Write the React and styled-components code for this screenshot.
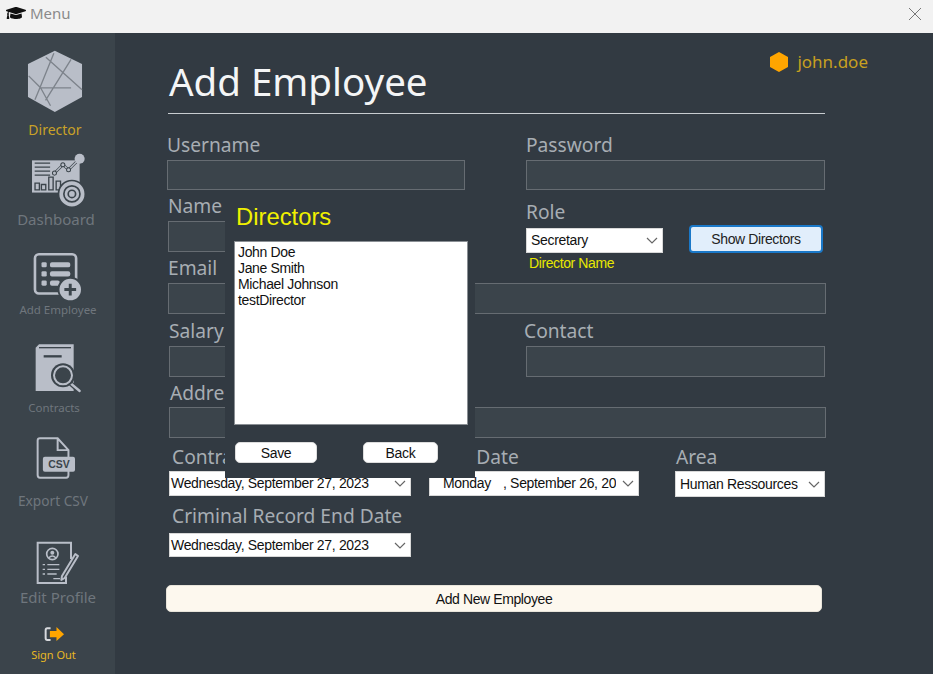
import styled, { createGlobalStyle } from "styled-components";
import { FaGraduationCap } from "react-icons/fa";

const ICON = "#b9bec8";
const SIDE = "#3b444b";
const BG = "#323a42";

export default function App() {
  return (
    <Page>
      <GlobalStyle />
      <TitleBar>
        <TitleLeft>
          <FaGraduationCap size={20} color="#111" />
          <TitleText>Menu</TitleText>
        </TitleLeft>
        <CloseIcon />
      </TitleBar>
      <Body>
        <Sidebar>
          <NavItem $top={17} $color="#c9a227" $size={14} $gap={9} $ix={-6} $lx={-5}>
            <HexLogo />
            <span>Director</span>
          </NavItem>
          <NavItem $top={15} $size={15} $gap={1} $ix={2} $lx={-3}>
            <DashboardIcon />
            <span>Dashboard</span>
          </NavItem>
          <NavItem $top={25} $size={11.5} $gap={1} $ix={0} $lx={1}>
            <AddIcon />
            <span>Add Employee</span>
          </NavItem>
          <NavItem $top={25} $size={11.5} $gap={7} $ix={1} $lx={-7}>
            <ContractsIcon />
            <span>Contracts</span>
          </NavItem>
          <NavItem $top={21} $size={13.7} $gap={14} $ix={-4} $lx={-9}>
            <CsvIcon />
            <span>Export CSV</span>
          </NavItem>
          <NavItem $top={32} $size={15} $gap={4} $ix={1} $lx={1}>
            <ProfileIcon />
            <span>Edit Profile</span>
          </NavItem>
          <NavItem $top={20} $size={11} $gap={3} $color="#e8b923" $ix={-7} $lx={-8}>
            <SignOutIcon />
            <span>Sign Out</span>
          </NavItem>
        </Sidebar>
        <Main>
          <Header>
            <Title>Add Employee</Title>
            <UserBadge>
              <svg width="20" height="22" viewBox="0 0 20 22">
                <path d="M10 1 L19 6 V16 L10 21 L1 16 V6 Z" fill="#ffa500" />
              </svg>
              <span>john.doe</span>
            </UserBadge>
          </Header>
          <Rule />
          <Row $h={61}>
            <Field $w={298} $ml={1}>
              <FieldLabel>Username</FieldLabel>
              <TextInput $h={30} $mt={3} />
            </Field>
            <Field $w={299} $ml={61}>
              <FieldLabel>Password</FieldLabel>
              <TextInput $h={30} $mt={3} />
            </Field>
          </Row>
          <Row $h={62}>
            <Field $w={298} $ml={2}>
              <FieldLabel>Name</FieldLabel>
              <TextInput $h={31} $mt={3} />
            </Field>
            <Field $w={137} $ml={60} $pt={6}>
              <FieldLabel>Role</FieldLabel>
              <SelectBox $w={137} $h={25} $mt={4}>
                <SelectText $pl={4}>Secretary</SelectText>
                <Chevron />
              </SelectBox>
              <DirectorName>Director Name</DirectorName>
            </Field>
            <ShowButton>Show Directors</ShowButton>
          </Row>
          <Row $h={63}>
            <Field $w={658} $ml={2}>
              <FieldLabel>Email</FieldLabel>
              <TextInput $h={31} $mt={3} />
            </Field>
          </Row>
          <Row $h={62}>
            <Field $w={298} $ml={3}>
              <FieldLabel>Salary</FieldLabel>
              <TextInput $h={31} $mt={3} />
            </Field>
            <Field $w={301} $ml={57}>
              <FieldLabel>Contact</FieldLabel>
              <TextInput $h={31} $mt={3} $ml={2} />
            </Field>
          </Row>
          <Row $h={64}>
            <Field $w={657} $ml={3}>
              <FieldLabel $indent={1}>Address</FieldLabel>
              <TextInput $h={31} $mt={2} />
            </Field>
          </Row>
          <Row $h={59}>
            <Field $w={242} $ml={3}>
              <FieldLabel $indent={3}>Contract Start Date</FieldLabel>
              <SelectBox $w={242} $h={25} $mt={2}>
                <SelectText $pl={1}>Wednesday, September 27, 2023</SelectText>
                <Chevron />
              </SelectBox>
            </Field>
            <Field $w={210} $ml={18}>
              <FieldLabel $indent={8}>End Date</FieldLabel>
              <SelectBox $w={210} $h={25} $mt={2}>
                <SelectText $pl={13}>
                  <DayPart>Monday</DayPart>, September 26, 2023
                </SelectText>
                <Chevron />
              </SelectBox>
            </Field>
            <Field $w={150} $ml={36}>
              <FieldLabel $indent={1}>Area</FieldLabel>
              <SelectBox $w={150} $h={26} $mt={2}>
                <SelectText $pl={4}>Human Ressources</SelectText>
                <Chevron />
              </SelectBox>
            </Field>
          </Row>
          <Row $h={53}>
            <Field $w={242} $ml={3}>
              <FieldLabel $indent={3}>Criminal Record End Date</FieldLabel>
              <SelectBox $w={242} $h={24} $mt={5}>
                <SelectText $pl={1}>Wednesday, September 27, 2023</SelectText>
                <Chevron />
              </SelectBox>
            </Field>
          </Row>
          <AddButton>Add New Employee</AddButton>
        </Main>
      </Body>
      <Dialog>
        <DialogTitle>Directors</DialogTitle>
        <DirectorList>
          <div>John Doe</div>
          <div>Jane Smith</div>
          <div>Michael Johnson</div>
          <div>testDirector</div>
        </DirectorList>
        <DialogActions>
          <DialogButton $w={82}>Save</DialogButton>
          <DialogButton $w={75}>Back</DialogButton>
        </DialogActions>
      </Dialog>
    </Page>
  );
}

function CloseIcon() {
  return (
    <CloseSvg width="14" height="14" viewBox="0 0 14 14">
      <path d="M1 1 L13 13 M13 1 L1 13" stroke="#777" strokeWidth="1" fill="none" />
    </CloseSvg>
  );
}

function Chevron() {
  return (
    <ChevronSvg width="12" height="7" viewBox="0 0 12 7">
      <path d="M1 1 L6 6 L11 1" stroke="#666" strokeWidth="1.2" fill="none" />
    </ChevronSvg>
  );
}

function HexLogo() {
  return (
    <svg width="56" height="63" viewBox="80 148 167 190">
      <path d="M163 150 L245 190 V290 L163 335 L82 290 V190 Z" fill={ICON} />
      <path
        d="M160 158 L118 262 L103 298 M120 262 L150 316 M84 226 L120 262 L212 262 M136 170 L245 268 M212 176 L135 300"
        stroke="#7d838b"
        strokeWidth="4"
        fill="none"
      />
    </svg>
  );
}

function DashboardIcon() {
  return (
    <svg width="57" height="57" viewBox="90 458 170 170">
      <rect x="96" y="480" width="142" height="96" fill={ICON} />
      <path d="M104 488 H150 M104 500 H150 M104 512 H150 M104 524 H150" stroke={SIDE} strokeWidth="4" />
      <path
        d="M105 548 h13 v20 h-13 z M124 552 h13 v16 h-13 z M146 530 h13 v38 h-13 z M168 542 h13 v26 h-13 z"
        fill={ICON}
        stroke={SIDE}
        strokeWidth="4"
      />
      <path d="M163 518 L188 493 L205 508 L238 475" stroke={SIDE} strokeWidth="8" fill="none" />
      <path d="M163 518 L188 493 L205 508 L238 475" stroke={ICON} strokeWidth="4" fill="none" />
      <circle cx="238" cy="475" r="15" fill={ICON} />
      <circle cx="163" cy="518" r="6" fill={ICON} stroke={SIDE} strokeWidth="3" />
      <circle cx="188" cy="493" r="6" fill={ICON} stroke={SIDE} strokeWidth="3" />
      <circle cx="205" cy="508" r="6" fill={ICON} stroke={SIDE} strokeWidth="3" />
      <circle cx="215" cy="580" r="40" fill={ICON} stroke={SIDE} strokeWidth="5" />
      <circle cx="215" cy="580" r="24" fill={ICON} stroke={SIDE} strokeWidth="5" />
      <circle cx="215" cy="580" r="11" fill={ICON} stroke={SIDE} strokeWidth="5" />
    </svg>
  );
}

function AddIcon() {
  return (
    <svg width="49" height="49" viewBox="98 36 150 148">
      <rect x="104" y="42" width="126" height="120" rx="12" fill="none" stroke={ICON} strokeWidth="8" />
      <rect x="124" y="66" width="16" height="16" rx="4" fill={ICON} />
      <rect x="124" y="94" width="16" height="16" rx="4" fill={ICON} />
      <rect x="124" y="122" width="16" height="16" rx="4" fill={ICON} />
      <rect x="150" y="66" width="62" height="16" rx="6" fill={ICON} />
      <rect x="150" y="94" width="62" height="16" rx="6" fill={ICON} />
      <rect x="150" y="122" width="30" height="16" rx="6" fill={ICON} />
      <circle cx="212" cy="150" r="36" fill={ICON} stroke={SIDE} strokeWidth="6" />
      <path d="M212 132 V168 M194 150 H230" stroke={SIDE} strokeWidth="9" />
    </svg>
  );
}

function ContractsIcon() {
  return (
    <svg width="48" height="50" viewBox="104 308 142 150">
      <path d="M118 312 H222 V452 H108 V322 Z" fill={ICON} />
      <path d="M118 322 H214" stroke={SIDE} strokeWidth="4" />
      <path d="M132 348 H186" stroke={SIDE} strokeWidth="7" />
      <path d="M208 425 L240 454" stroke={SIDE} strokeWidth="14" />
      <path d="M208 425 L240 452" stroke={ICON} strokeWidth="7" strokeLinecap="round" />
      <circle cx="190" cy="405" r="36" fill={SIDE} />
      <circle cx="190" cy="405" r="27" fill={SIDE} stroke={ICON} strokeWidth="6" />
    </svg>
  );
}

function CsvIcon() {
  return (
    <svg width="40" height="42" viewBox="106 20 122 128">
      <path
        d="M172 24 H118 Q111 24 111 31 V136 Q111 144 118 144 H198 Q205 144 205 136 V60 Z M172 24 V60 H205"
        fill="none"
        stroke={ICON}
        strokeWidth="6"
      />
      <rect x="127" y="80" width="98" height="46" rx="6" fill={ICON} />
      <CsvText x="176" y="115" textAnchor="middle">CSV</CsvText>
    </svg>
  );
}

function ProfileIcon() {
  return (
    <svg width="44" height="44" viewBox="108 332 132 130">
      <path d="M198 438 V457 H113 V336 H213 V385" fill="none" stroke={ICON} strokeWidth="6" />
      <circle cx="157" cy="370" r="17" fill="none" stroke={ICON} strokeWidth="5" />
      <circle cx="157" cy="366" r="6" fill={ICON} />
      <path d="M146 382 Q157 370 168 382" stroke={ICON} strokeWidth="4" fill="none" />
      <path
        d="M128 402 H135 M142 402 H178 M128 416 H135 M142 416 H178 M128 430 H135 M142 430 H170 M160 444 H180"
        stroke={ICON}
        strokeWidth="4"
      />
      <path d="M226 370 L186 436 L184 448 L194 442 L234 376 Z" fill="none" stroke={ICON} strokeWidth="6" strokeLinejoin="round" />
    </svg>
  );
}

function SignOutIcon() {
  return (
    <svg width="21" height="19" viewBox="130 585 64 56">
      <path d="M150 594 H140 Q135 594 135 600 V624 Q135 630 140 630 H150" fill="none" stroke="#d8dade" strokeWidth="6" />
      <path d="M148 602 H168 V590 L191 612 L168 633 V621 H148 Z" fill="#ffa500" />
    </svg>
  );
}

const GlobalStyle = createGlobalStyle`
  html, body {
    margin: 0;
    padding: 0;
    background: ${BG};
  }
  * {
    box-sizing: border-box;
  }
`;

const Page = styled.div`
  position: relative;
  width: 933px;
  height: 674px;
  overflow: hidden;
  font-family: "Noto Sans", "Open Sans", sans-serif;
`;

const TitleBar = styled.div`
  height: 33px;
  background: #f2f2f2;
  display: flex;
  align-items: center;
  justify-content: space-between;
  padding: 0 11px 7px 6px;
`;

const TitleLeft = styled.div`
  display: flex;
  align-items: center;
  gap: 4px;
`;

const TitleText = styled.span`
  font-size: 15px;
  color: #8a8a8a;
`;

const CloseSvg = styled.svg`
  display: block;
  margin-top: 1px;
`;

const Body = styled.div`
  display: flex;
  height: 641px;
`;

const Sidebar = styled.nav`
  width: 115px;
  flex: none;
  background: ${SIDE};
  display: flex;
  flex-direction: column;
`;

const NavItem = styled.div`
  width: 115px;
  margin-top: ${(p) => p.$top}px;
  display: flex;
  flex-direction: column;
  align-items: center;
  gap: ${(p) => p.$gap}px;
  font-size: ${(p) => p.$size}px;
  line-height: 16px;
  color: ${(p) => p.$color || "#6f767d"};
  white-space: nowrap;

  svg {
    display: block;
    margin-left: ${(p) => p.$ix}px;
  }

  span {
    margin-left: ${(p) => p.$lx}px;
  }
`;

const CsvText = styled.text`
  font-family: "Liberation Sans", sans-serif;
  font-weight: 700;
  font-size: 32px;
  fill: ${SIDE};
`;

const Main = styled.main`
  flex: 1;
  padding-left: 51px;
`;

const Header = styled.div`
  width: 702px;
  padding-top: 17px;
  display: flex;
  justify-content: space-between;
  align-items: flex-start;
`;

const Title = styled.h1`
  margin: 6px 0 1px 3px;
  font-weight: 400;
  font-size: 38.5px;
  line-height: 50px;
  color: #f4f5f6;
`;

const UserBadge = styled.div`
  display: flex;
  align-items: center;
  gap: 8px;
  height: 23px;
  font-size: 17px;
  color: #c8a020;
`;

const Rule = styled.div`
  width: 657px;
  height: 1px;
  margin: 6px 0 19px 2px;
  background: #c8ccd0;
`;

const Row = styled.div`
  display: flex;
  height: ${(p) => p.$h}px;
`;

const Field = styled.div`
  display: flex;
  flex-direction: column;
  flex: none;
  width: ${(p) => p.$w}px;
  margin-left: ${(p) => p.$ml || 0}px;
  padding-top: ${(p) => p.$pt || 0}px;
`;

const FieldLabel = styled.label`
  height: 24px;
  font-size: 19.2px;
  line-height: 24px;
  color: #a7adb3;
  white-space: nowrap;
  padding-left: ${(p) => p.$indent || 0}px;
`;

const TextInput = styled.div`
  height: ${(p) => p.$h}px;
  margin-top: ${(p) => p.$mt}px;
  margin-left: ${(p) => p.$ml || 0}px;
  background: ${SIDE};
  border: 1px solid #666c72;
`;

const SelectBox = styled.div`
  width: ${(p) => p.$w}px;
  height: ${(p) => p.$h}px;
  margin-top: ${(p) => p.$mt}px;
  flex: none;
  background: #fff;
  border: 1px solid #d8d8d8;
  display: flex;
  align-items: center;
  padding-right: 4px;
`;

const SelectText = styled.div`
  flex: 1;
  min-width: 0;
  overflow: hidden;
  white-space: nowrap;
  padding-left: ${(p) => p.$pl}px;
  padding-bottom: 1px;
  font-family: "Liberation Sans", sans-serif;
  font-size: 14px;
  letter-spacing: -0.33px;
  color: #111;
`;

const DayPart = styled.span`
  display: inline-block;
  width: 60px;
`;

const ChevronSvg = styled.svg`
  flex: none;
  margin-left: 6px;
`;

const DirectorName = styled.div`
  margin: 2px 0 0 3px;
  font-family: "Liberation Sans", sans-serif;
  font-size: 14px;
  letter-spacing: -0.4px;
  line-height: 16px;
  color: #e8e800;
  white-space: nowrap;
`;

const ShowButton = styled.button`
  flex: none;
  width: 134px;
  height: 28px;
  margin: 31px 0 0 26px;
  padding: 0 0 1px;
  background: #e1eefb;
  border: 2px solid #1a78c8;
  border-radius: 4px;
  font-family: "Liberation Sans", sans-serif;
  font-size: 14px;
  letter-spacing: -0.4px;
  color: #222;
`;

const AddButton = styled.button`
  display: block;
  width: 656px;
  height: 27px;
  margin-top: 28px;
  padding: 0;
  background: #fdf8ee;
  border: 1px solid #e8e4da;
  border-radius: 5px;
  font-family: "Liberation Sans", sans-serif;
  font-size: 14px;
  letter-spacing: -0.4px;
  color: #111;
`;

const Dialog = styled.div`
  position: absolute;
  left: 225px;
  top: 195px;
  width: 250px;
  height: 283px;
  background: ${BG};
  padding: 8px 7px 0 9px;
`;

const DialogTitle = styled.div`
  margin-left: 2px;
  font-family: "Liberation Sans", sans-serif;
  font-size: 23.8px;
  line-height: 28px;
  color: #f0f000;
`;

const DirectorList = styled.div`
  width: 234px;
  height: 184px;
  margin-top: 10px;
  padding: 2px 3px;
  background: #fff;
  border: 1px solid #8a8f94;
  font-family: "Liberation Sans", sans-serif;
  font-size: 14px;
  letter-spacing: -0.35px;
  line-height: 16px;
  color: #111;
`;

const DialogActions = styled.div`
  display: flex;
  gap: 46px;
  margin-top: 17px;
  padding-left: 1px;
`;

const DialogButton = styled.button`
  width: ${(p) => p.$w}px;
  height: 21px;
  padding: 0;
  background: #fff;
  border: 1px solid #ddd;
  border-radius: 5px;
  font-family: "Liberation Sans", sans-serif;
  font-size: 14px;
  letter-spacing: -0.3px;
  color: #111;
`;
